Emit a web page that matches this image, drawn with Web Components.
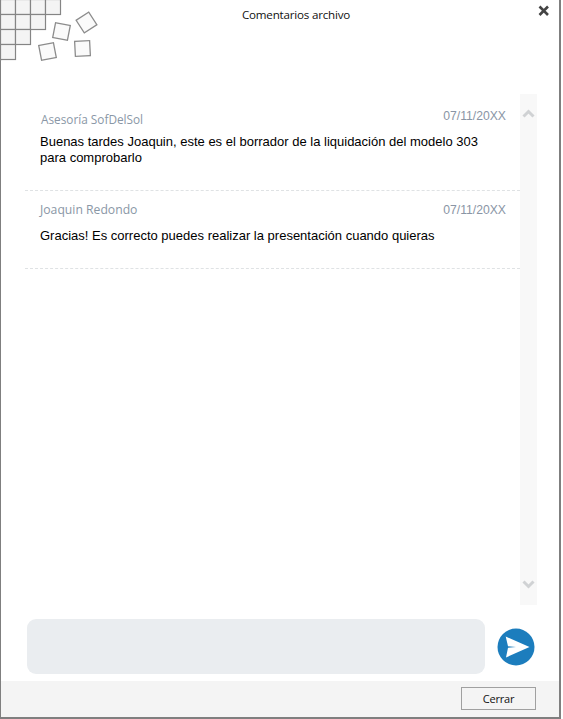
<!DOCTYPE html>
<html lang="es"><head><meta charset="utf-8"><title>Comentarios archivo</title>
<style>html,body{margin:0;padding:0;background:#fff}body{width:563px;height:719px;overflow:hidden;font-family:"Liberation Sans",Arial,sans-serif}</style>
</head><body>
<comments-dialog heading="Comentarios archivo">
  <comment-item author="Asesoría SofDelSol" date="07/11/20XX" variant="first">Buenas tardes Joaquin, este es el borrador de la liquidación del modelo 303 para comprobarlo</comment-item>
  <comment-item author="Joaquin Redondo" date="07/11/20XX" variant="second">Gracias! Es correcto puedes realizar la presentación cuando quieras</comment-item>
</comments-dialog>
<script>
class CommentItem extends HTMLElement{
  constructor(){super();const r=this.attachShadow({mode:'open'});
  const first=this.getAttribute('variant')==='first';
  r.innerHTML=`<style>
  :host{display:block;border-bottom:1px dashed #dfe2e4;box-sizing:border-box;height:${first?97:78}px;padding:${first?14:11}px 14px 0 15px}
  .top{display:flex;justify-content:space-between;align-items:flex-start;height:${first?26:21}px}
  .name{font:${first?11.8:12.2}px/16px "Open Sans",sans-serif;color:#8a97a6;padding:${first?3:0}px 0 0 ${first?1:0}px}
  .date{font:12.2px/14px "Liberation Sans",sans-serif;color:#8a95a5;padding-top:1px}
  .body{font:13px/16px "Liberation Sans",sans-serif;color:#000;width:450px;margin-top:${first?0:5}px}
  </style><div class="top"><span class="name">${this.getAttribute('author')}</span><span class="date">${this.getAttribute('date')}</span></div><div class="body"><slot></slot></div>`;}
}
class ScrollRail extends HTMLElement{
  constructor(){super();this.attachShadow({mode:'open'}).innerHTML=`<style>
  :host{display:flex;flex-direction:column;justify-content:space-between;align-items:center;width:17px;flex:none;background:#f8f8f8;box-sizing:border-box;padding:15px 0 16px}
  svg{display:block}</style>
  <svg width="13" height="9" viewBox="0 0 13 9"><path d="M1.5 7.5 6.5 2.5 11.5 7.5" fill="none" stroke="#d0d2d4" stroke-width="3"/></svg>
  <svg width="13" height="9" viewBox="0 0 13 9"><path d="M1.5 1.5 6.5 6.5 11.5 1.5" fill="none" stroke="#d0d2d4" stroke-width="3"/></svg>`;}
}
class SendButton extends HTMLElement{
  constructor(){super();this.attachShadow({mode:'open'}).innerHTML=`<style>
  :host{display:block;width:38px;height:38px;flex:none;cursor:pointer}svg{display:block}</style>
  <svg width="38" height="38" viewBox="0 0 38 38" role="img" aria-label="Enviar"><circle cx="19" cy="19" r="18.5" fill="#1c7dbd"/><path d="M8.7 8.5 32.5 19 9 29.5 11 19.8 19 19 11 18.2Z" fill="#fff"/></svg>`;}
}
class CommentsDialog extends HTMLElement{
  constructor(){super();const cells=[];
  const rows=[4,3,2,1];rows.forEach((n,y)=>{for(let x=0;x<n;x++)cells.push(`<rect x="${x*15+0.5}" y="${y*15-0.5}" width="15" height="15"/>`);});
  this.attachShadow({mode:'open'}).innerHTML=`<style>
  :host{display:flex;flex-direction:column;box-sizing:border-box;width:561px;height:719px;border:solid #7f7f7f;border-width:0 2px 2px 1px;background:#fff;position:relative}
  header{height:94px;flex:none;display:flex;justify-content:center;padding:7px 0 0 32px;box-sizing:border-box;font:11.6px/16px "Open Sans",sans-serif;letter-spacing:-.2px;color:#111}
  .deco{position:absolute;left:-1px;top:0}
  .close{position:absolute;left:536px;top:4px;display:block}
  main{flex:1;min-height:0;display:flex;padding:0 22px 0 24px}
  .list{flex:1;min-width:0}
  .compose{flex:none;height:76px;display:flex;padding:14px 24px 0 26px;box-sizing:border-box;gap:12px}
  .input{flex:1;height:55px;background:#eaedf0;border-radius:9px}
  .send{margin-top:9px}
  footer{flex:none;height:36px;background:#f4f4f4;display:flex;justify-content:flex-end;align-items:flex-start;padding:6px 23px 0 0;box-sizing:border-box}
  button{width:75px;height:23px;background:transparent;border:1px solid #a0a0a0;padding:0;font:11px "Open Sans",sans-serif;letter-spacing:-.2px;color:#111}
  </style>
  <svg class="deco" width="110" height="65" viewBox="0 0 110 65"><g fill="#f4f4f4" stroke="#858585" stroke-width="1.2">${cells.join('')}<path d="M.5 59V61" fill="none"/></g>
  <g fill="#fafafa" stroke="#8c8c8c" stroke-width="1.3"><rect x="54" y="24" width="15" height="15" transform="rotate(11 61.5 31.5)"/><rect x="79" y="15" width="15" height="15" transform="rotate(-33 86.5 22.5)"/><rect x="40" y="44" width="15" height="15" transform="rotate(-11 47.5 51.5)"/><rect x="75" y="41" width="15" height="15" transform="rotate(-3 82.5 48.5)"/></g></svg>
  <header>${this.getAttribute('heading')}</header>
  <svg class="close" width="14" height="14" viewBox="0 0 14 14" role="img" aria-label="Cerrar"><path d="M2.5 2.5 11 11M11 2.5 2.5 11" stroke="#444" stroke-width="2.6"/></svg>
  <main><div class="list"><slot></slot></div><scroll-rail></scroll-rail></main>
  <div class="compose"><div class="input"></div><send-button class="send"></send-button></div>
  <footer><button>Cerrar</button></footer>`;}
}
customElements.define('comment-item',CommentItem);
customElements.define('scroll-rail',ScrollRail);
customElements.define('send-button',SendButton);
customElements.define('comments-dialog',CommentsDialog);
</script>
</body></html>
